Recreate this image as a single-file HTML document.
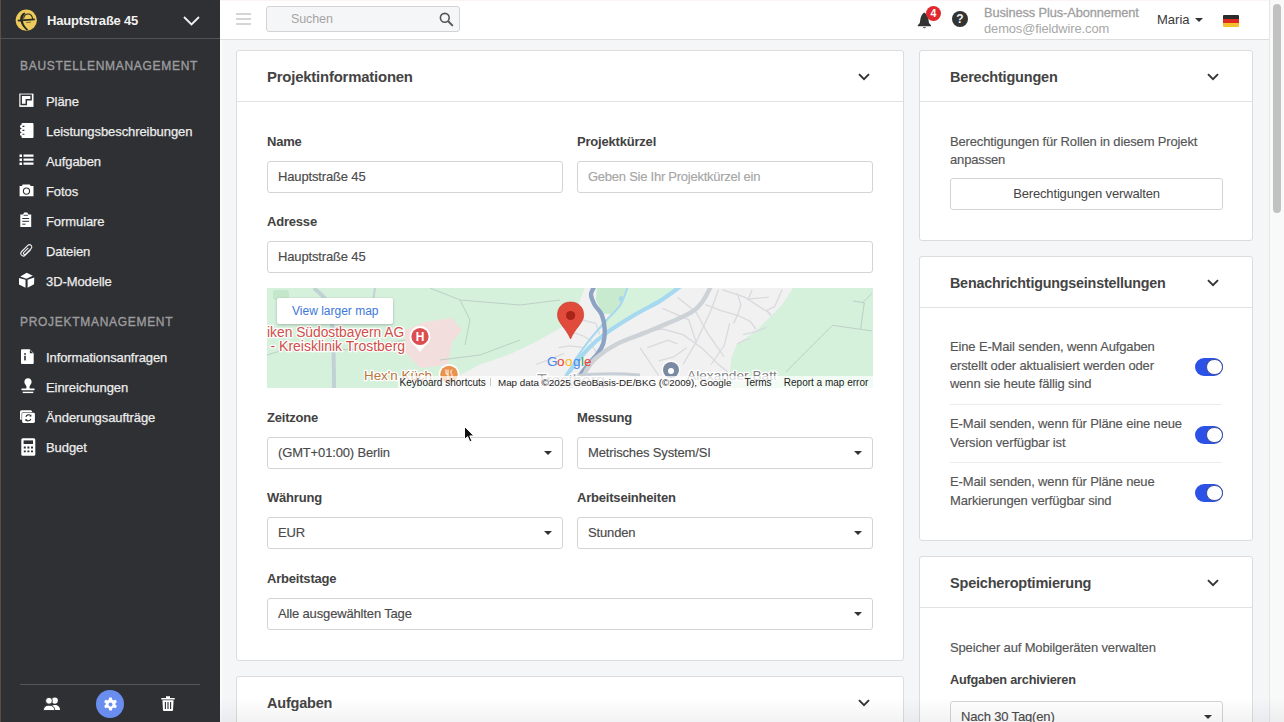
<!DOCTYPE html>
<html><head><meta charset="utf-8">
<style>
*{box-sizing:border-box;margin:0;padding:0}
html,body{width:1284px;height:722px;overflow:hidden;background:#f5f6f8;font-family:"Liberation Sans",sans-serif;}
.abs{position:absolute}
#side{position:absolute;left:0;top:0;width:220px;height:722px;background:#2f3033;}
#side .edge{position:absolute;left:0;top:0;width:1px;height:722px;background:#5a4f3f}
#side .hdr{position:absolute;left:0;top:0;width:220px;height:39px;border-bottom:1px solid #525357}
.proj{position:absolute;left:47px;top:13px;font-size:13px;font-weight:bold;color:#f2f2f2;white-space:nowrap;letter-spacing:-0.2px}
.sec{position:absolute;left:20px;font-size:12px;font-weight:normal;-webkit-text-stroke:0.35px #9c9c9e;color:#9c9c9e;letter-spacing:0.7px;white-space:nowrap}
.item{position:absolute;left:46px;font-size:13px;color:#ececec;-webkit-text-stroke:0.25px #ececec;white-space:nowrap;letter-spacing:-0.08px}
.ico{position:absolute;left:19px;width:15px;height:15px}
#top{position:absolute;left:220px;top:0;width:1049px;height:40px;background:#fff;border-bottom:1px solid #dedede}
#sb{position:absolute;left:1269px;top:0;width:15px;height:722px;background:#f9f9f9;border-left:1px solid #e6e6e6}
#sb .th{position:absolute;left:3px;top:4px;width:8px;height:209px;border-radius:4px;background:#c1c1c1}
.card{position:absolute;background:#fff;border:1px solid #dcdcdc;border-radius:3px}
.card .ch{position:absolute;left:0;top:0;right:0;height:51px;border-bottom:1px solid #e2e2e2}
.ttl{position:absolute;left:30px;top:18px;font-size:15px;font-weight:bold;color:#444;white-space:nowrap;letter-spacing:-0.2px}
.chev{position:absolute;width:12px;height:8px}
.lbl{position:absolute;font-size:13px;font-weight:bold;color:#424242;white-space:nowrap;letter-spacing:-0.2px}
.inp{position:absolute;height:32px;border:1px solid #d4d4d4;border-radius:3px;background:#fff;font-size:13px;color:#4a4a4a;-webkit-text-stroke:0.15px currentColor;padding-left:10px;line-height:30px;white-space:nowrap;letter-spacing:-0.15px}
.inp .car{position:absolute;right:10px;top:13px;width:0;height:0;border-left:4px solid transparent;border-right:4px solid transparent;border-top:4px solid #333}
.txt{position:absolute;font-size:13px;color:#555;-webkit-text-stroke:0.15px #555;line-height:18.7px;letter-spacing:-0.15px}
.tog{position:absolute;left:275px;width:28px;height:17.5px;border-radius:9px;background:#2b51e6}
.tog:after{content:"";position:absolute;right:0.5px;top:0.5px;width:16.5px;height:16.5px;box-sizing:border-box;border-radius:50%;background:#fff;border:1.2px solid #3b4f9a}
.sep{position:absolute;left:30px;width:272px;height:1px;background:#ececec}
</style></head><body>

<div id="side">
  <div class="edge"></div>
  <div class="hdr"></div>
  <svg class="abs" style="left:15px;top:9px" width="23" height="23" viewBox="0 0 23 23">
    <circle cx="11.3" cy="11.2" r="10.6" fill="#eccb5c"/>
    <path d="M9.5 3.4 C6.2 4.6 4.6 8 5.4 12 C6.2 16 8.8 18.8 11.8 21.4 L13.2 20.6 C10.6 18 8.6 15.6 8 12.4 C7.4 9 8.2 6.2 10.4 4.4 Z" fill="#2a2a26"/>
    <path d="M2.8 11.6 L19.8 10.4" stroke="#2a2a26" stroke-width="1.6"/>
    <path d="M8.6 9.6 C9 6.6 10.6 5 13 5 C15.6 5 17.4 7 17.6 10.2" fill="none" stroke="#2a2a26" stroke-width="1.1"/>
    <path d="M11 13.6 L16 13.2" stroke="#2a2a26" stroke-width="0.8" opacity="0.7"/>
  </svg>
  <div class="proj">Hauptstraße 45</div>
  <svg class="abs" style="left:183px;top:16px" width="17" height="10" viewBox="0 0 17 10"><path d="M1 1 L8.5 8.5 L16 1" fill="none" stroke="#f2f2f2" stroke-width="1.8"/></svg>
  <div class="sec" style="top:59px">BAUSTELLENMANAGEMENT</div>
  <div class="sec" style="top:315px">PROJEKTMANAGEMENT</div>

  <svg class="abs" style="left:19px;top:93px" width="15" height="14" viewBox="0 0 15 14"><rect x="0.3" y="0.6" width="14.2" height="13.3" fill="#fff"/><path d="M2.2 11.6 V2.2 H12.1 V6.8 H7.3 V11.6 Z" fill="none" stroke="#2f3033" stroke-width="1.5"/></svg>
  <div class="item" style="top:94px">Pläne</div>

  <svg class="abs" style="left:19px;top:122px" width="15" height="17" viewBox="0 0 15 17"><rect x="2.5" y="0.9" width="12" height="15.1" rx="1" fill="#fff"/><circle cx="2.6" cy="4.4" r="1.6" fill="#fff"/><circle cx="2.6" cy="8.4" r="1.6" fill="#fff"/><circle cx="2.6" cy="12.2" r="1.6" fill="#fff"/><path d="M3.4 4.4h2M3.4 8.4h2M3.4 12.2h2" stroke="#2f3033" stroke-width="1.1"/></svg>
  <div class="item" style="top:124px">Leistungsbeschreibungen</div>

  <svg class="ico" style="top:154px;height:12px" viewBox="0 0 15 12"><path d="M0.5 0.5h2.5v2.5h-2.5zM0.5 4.5h2.5v2.5h-2.5zM0.5 8.5h2.5v2.5h-2.5zM4.5 0.6h10v2.2h-10zM4.5 4.6h10v2.2h-10zM4.5 8.6h10v2.2h-10z" fill="#fff"/></svg>
  <div class="item" style="top:154px">Aufgaben</div>

  <svg class="abs" style="left:19px;top:183px" width="15" height="14" viewBox="0 0 15 14"><path d="M3.6 1.4 H10.9 L11.6 3.1 H14.5 V13.3 H0.6 V3.1 H3.0 Z" fill="#fff"/><circle cx="7.5" cy="8.1" r="3.1" fill="none" stroke="#2f3033" stroke-width="1.1"/></svg>
  <div class="item" style="top:184px">Fotos</div>

  <svg class="abs" style="left:20px;top:212px" width="12" height="16" viewBox="0 0 12 16"><path d="M0.3 2.5 H3 L4.2 0.4 H7.3 L8.4 2.5 H11.2 V15 H0.3 Z" fill="#fff"/><path d="M3.6 3.3h4.3" stroke="#2f3033" stroke-width="0.9"/><path d="M2.3 6.5h6.8M2.3 9.3h6.8M2.3 12.2h3.2" stroke="#2f3033" stroke-width="1"/></svg>
  <div class="item" style="top:214px">Formulare</div>

  <svg class="abs" style="left:19px;top:243px" width="15" height="16" viewBox="0 0 15 16"><path d="M11.6 6.8 L6.3 12.1 C5.2 13.2 3.6 13.2 2.6 12.2 C1.6 11.2 1.6 9.6 2.7 8.5 L8.8 2.4 C9.7 1.5 11.2 1.5 12.1 2.4 C13 3.3 13 4.8 12.1 5.7 L6.6 11.2 C6.1 11.7 5.3 11.7 4.8 11.2 C4.3 10.7 4.3 9.9 4.8 9.4 L9.3 4.9" fill="none" stroke="#f0f0f0" stroke-width="1.1"/></svg>
  <div class="item" style="top:244px">Dateien</div>

  <svg class="abs" style="left:18px;top:272px" width="17" height="17" viewBox="0 0 17 17"><path d="M8.7 0.7 L14.8 3.8 L8.4 6.8 L2.3 4.4 Z" fill="#fff"/><path d="M1 5.9 L7.5 7.8 V15.7 L1 12.6 Z" fill="#fff"/><path d="M9.6 7.8 L16.3 5.6 L16 12.3 L9.6 15.7 Z" fill="#fff"/></svg>
  <div class="item" style="top:274px">3D-Modelle</div>

  <svg class="ico" style="top:349px;left:21px;width:13px" viewBox="0 0 13 15"><path d="M1 0.3h7.8l3.9 3.9v9.8a1 1 0 0 1 -1 1H1a1 1 0 0 1 -1 -1V1.3a1 1 0 0 1 1 -1z" fill="#fff"/><path d="M8.8 0.8 L12.2 4.2 H8.8z" fill="#2f3033"/><circle cx="4" cy="5" r="0.9" fill="#2f3033"/><rect x="3.2" y="6.8" width="1.6" height="4.6" fill="#2f3033"/></svg>
  <div class="item" style="top:350px">Informationsanfragen</div>

  <svg class="ico" style="top:378px;left:20.5px;width:14px;height:16px" viewBox="0 0 14 16"><path d="M7 0.3 C9.3 0.3 10.6 2 10.6 4 C10.6 5.8 9.2 7 8.6 8.2 L8.6 10.4 H13.5 V12.3 H0.5 V10.4 H5.4 L5.4 8.2 C4.8 7 3.4 5.8 3.4 4 C3.4 2 4.7 0.3 7 0.3Z" fill="#fff"/><rect x="1.7" y="13.7" width="10.6" height="1.4" fill="#fff"/></svg>
  <div class="item" style="top:380px">Einreichungen</div>

  <svg class="abs" style="left:19px;top:409px" width="17" height="15" viewBox="0 0 17 15"><rect x="1" y="1.3" width="12.2" height="9.7" rx="1.6" fill="#fff"/><rect x="2.6" y="3.2" width="13.8" height="11.3" rx="1.6" fill="#2f3033"/><rect x="3.1" y="3.7" width="12.8" height="10.3" rx="1.4" fill="#fff"/><path d="M6.9 8 A2.7 2.7 0 0 1 11.8 7 M11.8 9.8 A2.7 2.7 0 0 1 6.9 10.6" fill="none" stroke="#2f3033" stroke-width="1.1"/><path d="M12.4 5.6 L12.3 7.8 L10.2 7.2Z M6.3 12.1 L6.4 9.9 L8.5 10.5Z" fill="#2f3033"/></svg>
  <div class="item" style="top:410px">Änderungsaufträge</div>

  <svg class="ico" style="top:438px;left:20.5px;width:15px;height:18px" viewBox="0 0 15 18"><rect x="0.3" y="0.3" width="14" height="17.4" rx="1.5" fill="#fff"/><rect x="2.6" y="2.4" width="9.4" height="3.6" fill="#2f3033"/><path d="M2.8 8.6h2v1.8h-2zM6.4 8.6h2v1.8h-2zM10 8.6h2v1.8h-2zM2.8 12.4h2v1.8h-2zM6.4 12.4h2v1.8h-2zM10 12.4h2v1.8h-2z" fill="#2f3033"/></svg>
  <div class="item" style="top:440px">Budget</div>

  <div class="abs" style="left:20px;top:684px;width:180px;height:1px;background:#55565a"></div>
  <svg class="abs" style="left:43px;top:697px" width="18" height="14" viewBox="0 0 18 14"><circle cx="11.8" cy="3.6" r="3.1" fill="#fff"/><path d="M7.5 13 C7.5 9.5 9 8 11.8 8 C14.8 8 17 9.8 17 13Z" fill="#fff"/><circle cx="6" cy="3.8" r="3.4" fill="#fff" stroke="#2f3033" stroke-width="0.9"/><path d="M0.4 13.5 C0.4 10 2.5 8.2 6 8.2 C9.5 8.2 11.8 10 11.8 13.5Z" fill="#fff" stroke="#2f3033" stroke-width="0.9"/></svg>
  <div class="abs" style="left:96px;top:690px;width:28px;height:28px;border-radius:50%;background:#6a8ef0"></div>
  <svg class="abs" style="left:102.5px;top:696.5px" width="15" height="15" viewBox="0 0 15 15"><path d="M6.2 0.5h2.6l0.4 2 1.5 0.9 1.9-0.7 1.3 2.2-1.5 1.3v1.6l1.5 1.3-1.3 2.2-1.9-0.7-1.5 0.9-0.4 2H6.2l-0.4-2-1.5-0.9-1.9 0.7-1.3-2.2 1.5-1.3V6.2L1.1 4.9l1.3-2.2 1.9 0.7 1.5-0.9z" fill="#fff"/><circle cx="7.5" cy="7.5" r="2" fill="#6a8ef0"/></svg>
  <svg class="abs" style="left:161px;top:696px" width="14" height="15" viewBox="0 0 14 15"><path d="M0.3 2h13.4v1.6H0.3z M5 0.3h4v1.8H5z" fill="#fff"/><path d="M1.4 4.2h11.2l-0.6 10a0.8 0.8 0 0 1 -0.8 0.7H2.8a0.8 0.8 0 0 1 -0.8 -0.7z" fill="#fff"/><path d="M4.4 6v7M7 6v7M9.6 6v7" stroke="#2f3033" stroke-width="1.1"/></svg>
</div>

<div class="abs" style="left:220px;top:40px;width:2px;height:682px;background:#fbfbfc"></div>
<div id="top">
  <div class="abs" style="left:0;top:0;width:1050px;height:1px;background:#fbf4f2"></div>
  <div class="abs" style="left:16px;top:13px;width:15px;height:2px;background:#d5d5d5"></div>
  <div class="abs" style="left:16px;top:18px;width:15px;height:2px;background:#d5d5d5"></div>
  <div class="abs" style="left:16px;top:23px;width:15px;height:2px;background:#d5d5d5"></div>
  <div class="abs" style="left:46px;top:6px;width:194px;height:26px;border:1px solid #d3d3d3;border-radius:3px;background:#f5f6f7"></div>
  <div class="abs" style="left:71px;top:12px;font-size:12.5px;color:#a5a5a5;letter-spacing:-0.1px">Suchen</div>
  <svg class="abs" style="left:219px;top:12px" width="15" height="15" viewBox="0 0 15 15"><circle cx="5.8" cy="5.8" r="4.4" fill="none" stroke="#555" stroke-width="1.6"/><path d="M9 9 L13.8 13.8" stroke="#555" stroke-width="1.9"/></svg>
  <svg class="abs" style="left:696px;top:11px" width="18" height="18" viewBox="0 0 18 18"><path d="M8.3 1.6 C6.6 2.6 4.6 5.6 4.2 9.2 L3.8 12 L1.8 14.2 V15.2 H15 V14.2 L13 12 L12.6 9.2 C12.2 5.6 10 2.6 8.3 1.6Z" fill="#333"/><path d="M6.8 16.3 A1.8 1.6 0 0 0 10 16.3Z" fill="#333"/></svg>
  <div class="abs" style="left:706px;top:6px;width:15px;height:15px;border-radius:50%;background:#e0282e;color:#fff;font-size:10.5px;font-weight:bold;text-align:center;line-height:15px">4</div>
  <div class="abs" style="left:732px;top:11px;width:16px;height:16px;border-radius:50%;background:#333;color:#f4f4f4;font-size:12px;font-weight:bold;text-align:center;line-height:16px">?</div>
  <div class="abs" style="left:764px;top:5px;font-size:12.8px;-webkit-text-stroke:0.3px #a0a0a0;color:#a0a0a0;white-space:nowrap;letter-spacing:-0.1px">Business Plus-Abonnement</div>
  <div class="abs" style="left:764px;top:20.5px;font-size:12.9px;color:#a8a8a8;white-space:nowrap;letter-spacing:-0.1px">demos@fieldwire.com</div>
  <div class="abs" style="left:937px;top:12px;font-size:13px;color:#3a3a3a;white-space:nowrap">Maria</div>
  <div class="abs" style="left:975px;top:18px;width:0;height:0;border-left:4px solid transparent;border-right:4px solid transparent;border-top:4px solid #333"></div>
  <div class="abs" style="left:1003px;top:15px;width:16px;height:4px;background:#2b2b2b;border-radius:1px 1px 0 0"></div>
  <div class="abs" style="left:1003px;top:19px;width:16px;height:4px;background:#dd2a22"></div>
  <div class="abs" style="left:1003px;top:23px;width:16px;height:4px;background:#f5c02c;border-radius:0 0 1px 1px"></div>
</div>
<div class="card" style="left:236px;top:50px;width:668px;height:611px">
  <div class="ch"></div>
  <div class="ttl" style="left:30px;top:18px;font-size:14.9px">Projektinformationen</div>
  <svg class="abs" style="left:621px;top:22px" width="12" height="8" viewBox="0 0 12 8"><path d="M1 1.2 L6 6.2 L11 1.2" fill="none" stroke="#333" stroke-width="1.9"/></svg>
  <div class="lbl" style="left:30px;top:83px">Name</div>
  <div class="inp" style="left:30px;top:110px;width:296px">Hauptstraße 45</div>
  <div class="lbl" style="left:340px;top:83px">Projektkürzel</div>
  <div class="inp" style="left:340px;top:110px;width:296px;color:#a6a6a6;letter-spacing:-0.25px">Geben Sie Ihr Projektkürzel ein</div>
  <div class="lbl" style="left:30px;top:163px">Adresse</div>
  <div class="inp" style="left:30px;top:190px;width:606px">Hauptstraße 45</div>
  <div id="map" class="abs" style="left:30px;top:237px;width:606px;height:100px;background:#d3f0dc;overflow:hidden"><svg width="606" height="100" viewBox="0 0 606 100" style="position:absolute;left:0;top:0">
<rect width="606" height="100" fill="#d5f1dc"/>
<polygon points="138.0,42.0 158.0,34.0 185.0,30.0 195.0,42.0 185.0,54.0 181.0,77.0 153.0,80.0 138.0,64.0" fill="#f3dede"/>
<path d="M0.0 67.0 L33.0 57.0 L83.0 62.0 L138.0 52.0" fill="none" stroke="#bdcfc6" stroke-width="1"/><path d="M193.0 12.0 L203.0 32.0 L198.0 57.0" fill="none" stroke="#bdcfc6" stroke-width="1"/><path d="M163.0 0.0 L193.0 12.0 L253.0 17.0 L293.0 12.0" fill="none" stroke="#bdcfc6" stroke-width="1"/><path d="M173.0 72.0 L213.0 67.0 L253.0 52.0" fill="none" stroke="#bdcfc6" stroke-width="1"/><path d="M518.8 84.0 L565.5 37.3 L604.8 42.9" fill="none" stroke="#bdcfc6" stroke-width="1"/><path d="M595.4 14.8 L604.8 5.5" fill="none" stroke="#bdcfc6" stroke-width="1"/><path d="M586.1 13.0 L597.3 14.8 L593.6 41.0" fill="none" stroke="#bdcfc6" stroke-width="1"/>
<path d="M47 0 C52 5 58 9 62 16 C66 30 67 60 67 100" fill="none" stroke="#c2d1d6" stroke-width="4"/><path d="M108 0 L106.5 10" fill="none" stroke="#c2d1d6" stroke-width="2"/><rect x="6" y="2" width="16" height="10" rx="3" fill="#c4e6cb"/>

<polygon points="317.7,0.0 526.0,0.0 515.0,16.7 504.0,28.0 489.0,43.0 470.0,56.0 464.6,69.0 462.7,84.0 461.0,100.0 173.0,100.0 188.0,90.0 213.0,76.5 241.0,67.0 269.0,54.0 295.0,39.0 310.0,20.0" fill="#f2f1f1"/>
<polygon points="330.0,0.0 360.0,0.0 353.5,16.7 345.0,26.0 336.0,26.0 329.0,12.0" fill="#c8eacf"/><path d="M354 8 a2 3 0 1 0 0.1 0" fill="#a6d6ee"/>
<polygon points="360.0,0.0 414.0,0.0 393.9,12.4 367.9,26.8 340.6,44.1 337.0,34.0 345.0,26.0 353.5,16.7" fill="#d6f2dd"/>
<path d="M438.4 16.7 L453.4 22.3 L472.1 27.9 L483.3 33.5 L488.9 41.0" fill="none" stroke="#d9dadd" stroke-width="1.3"/><path d="M451.5 1.7 L444.0 22.3 L429.1 54.1 L416.0 76.5" fill="none" stroke="#d9dadd" stroke-width="1.3"/><path d="M470.2 5.5 L473.9 16.7 L470.2 27.9 L466.5 35.4" fill="none" stroke="#d9dadd" stroke-width="1.3"/><path d="M485.1 1.7 L481.4 11.1 L502.0 9.2" fill="none" stroke="#d9dadd" stroke-width="1.3"/><path d="M515.1 1.7 L507.6 18.6 L500.1 22.3 L503.8 27.9" fill="none" stroke="#d9dadd" stroke-width="1.3"/><path d="M373.0 44.7 L395.4 41.0 L416.0 46.6 L434.7 59.7 L451.5 76.5 L460.9 84.0" fill="none" stroke="#d9dadd" stroke-width="1.3"/><path d="M380.5 59.7 L401.0 52.2 L410.4 55.9" fill="none" stroke="#d9dadd" stroke-width="1.3"/><path d="M391.7 72.8 L406.6 69.0 L419.7 59.7" fill="none" stroke="#d9dadd" stroke-width="1.3"/><path d="M410.4 9.2 L429.1 24.2 L440.3 44.7 L457.1 69.0" fill="none" stroke="#d9dadd" stroke-width="1.3"/><path d="M462.7 35.4 L457.1 57.8 L444.0 76.5" fill="none" stroke="#d9dadd" stroke-width="1.3"/><path d="M475.8 46.6 L485.1 44.7 L500.1 39.1" fill="none" stroke="#d9dadd" stroke-width="1.3"/><path d="M470.2 55.9 L477.7 52.2 L483.3 50.3" fill="none" stroke="#d9dadd" stroke-width="1.3"/><path d="M455.2 1.7 L477.7 9.2 L503.8 26.0" fill="none" stroke="#d9dadd" stroke-width="1.3"/><path d="M395.4 20.4 L421.6 31.6 L429.1 54.1" fill="none" stroke="#d9dadd" stroke-width="1.3"/><path d="M373.0 59.7 L384.2 76.5 L391.7 87.7" fill="none" stroke="#d9dadd" stroke-width="1.3"/><path d="M313.9 31.6 L328.9 35.4 L332.6 46.6" fill="none" stroke="#d9dadd" stroke-width="1.3"/><path d="M306.5 44.7 L317.7 48.5 L325.1 54.1" fill="none" stroke="#d9dadd" stroke-width="1.3"/><path d="M291.5 59.7 L302.7 57.8 L317.7 59.7" fill="none" stroke="#d9dadd" stroke-width="1.3"/><path d="M269.1 76.5 L284.0 70.9 L297.1 65.3" fill="none" stroke="#d9dadd" stroke-width="1.3"/><path d="M325.1 57.8 L332.6 69.0" fill="none" stroke="#d9dadd" stroke-width="1.3"/>
<path d="M414.0 -2.0 C410.6 0.4 401.6 7.6 393.9 12.4 C386.2 17.2 376.8 21.5 367.9 26.8 C359.0 32.1 348.3 38.6 340.6 44.1 C332.9 49.6 328.3 53.3 321.8 60.0 C315.3 66.7 306.4 77.5 301.6 84.5 C296.8 91.5 294.4 99.1 293.0 102.0" fill="none" stroke="#a6d9ef" stroke-width="4.2"/><path d="M361.0 -2.0 C359.8 1.1 356.9 11.2 353.5 16.7 C350.1 22.2 345.9 25.0 340.6 31.0 C335.3 37.0 327.2 46.0 321.8 52.8 C316.4 59.6 310.3 68.8 308.0 72.0" fill="none" stroke="#a6d9ef" stroke-width="2"/>
<path d="M327.6 -2.0 C327.0 -0.6 324.0 3.5 324.0 6.6 C324.0 9.7 325.8 13.3 327.6 16.7 C329.4 20.1 333.1 22.7 334.8 26.8 C336.5 30.9 337.5 36.4 337.7 41.2 C337.9 46.0 337.4 51.5 336.2 55.6 C335.0 59.7 332.9 62.3 330.5 65.7 C328.1 69.1 325.0 71.8 321.8 75.8 C318.5 79.9 314.1 85.6 311.0 90.0 C307.9 94.4 304.3 100.0 303.0 102.0" fill="none" stroke="#8ca3c3" stroke-width="4.4"/>
<path d="M444.0 -2.0 C442.4 0.9 438.2 10.5 434.2 15.3 C430.2 20.1 428.9 22.0 419.8 26.8 C410.7 31.6 391.0 39.3 379.5 44.1 C368.0 48.9 359.0 51.3 350.6 55.6 C342.2 59.9 334.3 65.4 329.0 70.0 C323.7 74.6 322.0 77.7 319.0 83.0 C316.0 88.3 312.3 98.8 311.0 102.0" fill="none" stroke="#cdd2d7" stroke-width="4.4"/>
<path d="M273 100 C278 87 333 84 373 87" fill="none" stroke="#c6cfd6" stroke-width="3"/>
<g font-family="Liberation Sans" font-size="13.8" stroke="#fff" stroke-width="2.5" paint-order="stroke" stroke-linejoin="round">
 <text x="0" y="49" fill="#cf4e49">iken Südostbayern AG</text>
 <text x="3.5" y="62.5" fill="#cf4e49" font-size="14">- Kreisklinik Trostberg</text>
 <text x="97" y="92" fill="#b87640" font-size="13.4">Hex'n Küch</text>
 <text x="420" y="92" fill="#7e7e7e" font-size="13.7">Alexander Batt</text>
 <text x="270" y="98" fill="#9a9a9a" font-size="16">Trostberg</text>
</g>
<circle cx="153" cy="48.5" r="10.5" fill="#fff"/>
<path d="M146 55 L153 64 L160 55Z" fill="#fff"/>
<circle cx="153" cy="48.5" r="8.6" fill="#dc4d4f"/>
<text x="153" y="53" font-family="Liberation Sans" font-weight="bold" font-size="12" fill="#fff" text-anchor="middle">H</text>
<circle cx="182" cy="86.5" r="10.5" fill="#fff"/>
<circle cx="182" cy="86.5" r="8.8" fill="#e9924d"/><path d="M179 81.5v4.5M181 81.5v4.5M179 86h2v5M185 81.5c-1.5 1-1.5 4 0 5v5" fill="none" stroke="#fff" stroke-width="1"/>
<circle cx="404" cy="82" r="9.5" fill="#fff"/>
<circle cx="404" cy="82" r="8" fill="#7b8aa3"/>
<circle cx="404" cy="83" r="3" fill="#fff"/>
<g font-family="Liberation Sans" font-size="13.5" font-weight="normal">
 <text x="280" y="78" fill="#4285f4">G</text>
 <text x="290" y="78" fill="#ea4335">o</text>
 <text x="298" y="78" fill="#fbbc05">o</text>
 <text x="306" y="78" fill="#4285f4">g</text>
 <text x="314" y="78" fill="#34a853">l</text>
 <text x="317" y="78" fill="#ea4335">e</text>
</g>
<path d="M303.6 14 C295 14 290.5 20 290.5 27 C290.5 35 299 40 303.6 51 C308 40 316.70000000000005 35 316.70000000000005 27 C316.70000000000005 20 312 14 303.6 14Z" fill="#e04b3c" stroke="#c5392b" stroke-width="0.6"/>
<circle cx="303.6" cy="27.5" r="4.6" fill="#a82418"/>
<rect x="131" y="88" width="475" height="12" fill="#fff" fill-opacity="0.72"/>
<g font-family="Liberation Sans" font-size="10" fill="#222">
 <text x="132.60000000000002" y="97.5">Keyboard shortcuts</text>
 <text x="231" y="97.5" font-size="9.8">Map data ©2025 GeoBasis-DE/BKG (©2009), Google</text>
 <text x="477.4" y="97.5">Terms</text>
 <text x="516.8" y="97.5">Report a map error</text>
</g>
<rect x="223" y="90" width="1" height="8" fill="#c8c8c8"/>
</svg>
<div class="abs" style="left:10px;top:10px;width:116px;height:26px;background:#fff;border-radius:2px;box-shadow:0 1px 3px rgba(0,0,0,0.25);font-size:12px;color:#3d78d8;line-height:26px;padding-left:15px;white-space:nowrap">View larger map</div>
</div>
  <div class="lbl" style="left:30px;top:359px">Zeitzone</div>
  <div class="inp" style="left:30px;top:386px;width:296px">(GMT+01:00) Berlin<div class="car"></div></div>
  <div class="lbl" style="left:340px;top:359px">Messung</div>
  <div class="inp" style="left:340px;top:386px;width:296px">Metrisches System/SI<div class="car"></div></div>
  <div class="lbl" style="left:30px;top:439px">Währung</div>
  <div class="inp" style="left:30px;top:466px;width:296px">EUR<div class="car"></div></div>
  <div class="lbl" style="left:340px;top:439px">Arbeitseinheiten</div>
  <div class="inp" style="left:340px;top:466px;width:296px">Stunden<div class="car"></div></div>
  <div class="lbl" style="left:30px;top:520px">Arbeitstage</div>
  <div class="inp" style="left:30px;top:547px;width:606px">Alle ausgewählten Tage<div class="car"></div></div>
</div>
<div class="card" style="left:236px;top:676px;width:668px;height:80px">
  <div class="ch"></div>
  <div class="ttl" style="left:30px;top:18px;font-size:14.5px">Aufgaben</div>
  <svg class="abs" style="left:621px;top:22px" width="12" height="8" viewBox="0 0 12 8"><path d="M1 1.2 L6 6.2 L11 1.2" fill="none" stroke="#333" stroke-width="1.9"/></svg>
</div>
<div class="card" style="left:919px;top:50px;width:334px;height:191px">
  <div class="ch"></div>
  <div class="ttl" style="left:30px;top:18px;font-size:14.5px">Berechtigungen</div>
  <svg class="abs" style="left:287px;top:22px" width="12" height="8" viewBox="0 0 12 8"><path d="M1 1.2 L6 6.2 L11 1.2" fill="none" stroke="#333" stroke-width="1.9"/></svg>
  <div class="txt" style="left:30px;top:82px;width:280px;line-height:18.4px">Berechtigungen für Rollen in diesem Projekt anpassen</div>
  <div class="abs" style="left:30px;top:127px;width:273px;height:32px;border:1px solid #d4d4d4;border-radius:3px;text-align:center;line-height:30px;font-size:13px;color:#444;letter-spacing:-0.15px">Berechtigungen verwalten</div>
</div>
<div class="card" style="left:919px;top:256px;width:334px;height:285px">
  <div class="ch"></div>
  <div class="ttl" style="left:30px;top:18px;font-size:14.3px">Benachrichtigungseinstellungen</div>
  <svg class="abs" style="left:287px;top:22px" width="12" height="8" viewBox="0 0 12 8"><path d="M1 1.2 L6 6.2 L11 1.2" fill="none" stroke="#333" stroke-width="1.9"/></svg>
  <div class="txt" style="left:30px;top:81px;width:236px">Eine E-Mail senden, wenn Aufgaben erstellt oder aktualisiert werden oder wenn sie heute fällig sind</div>
  <div class="tog" style="top:101px"></div>
  <div class="sep" style="top:147px"></div>
  <div class="txt" style="left:30px;top:158px;width:236px">E-Mail senden, wenn für Pläne eine neue Version verfügbar ist</div>
  <div class="tog" style="top:169px"></div>
  <div class="sep" style="top:205px"></div>
  <div class="txt" style="left:30px;top:216px;width:236px">E-Mail senden, wenn für Pläne neue Markierungen verfügbar sind</div>
  <div class="tog" style="top:227px"></div>
</div>
<div class="card" style="left:919px;top:556px;width:334px;height:200px">
  <div class="ch"></div>
  <div class="ttl" style="left:30px;top:18px;font-size:14.5px">Speicheroptimierung</div>
  <svg class="abs" style="left:287px;top:22px" width="12" height="8" viewBox="0 0 12 8"><path d="M1 1.2 L6 6.2 L11 1.2" fill="none" stroke="#333" stroke-width="1.9"/></svg>
  <div class="txt" style="left:30px;top:82px;width:280px">Speicher auf Mobilgeräten verwalten</div>
  <div class="lbl" style="left:30px;top:116px;font-size:12.7px">Aufgaben archivieren</div>
  <div class="inp" style="left:30px;top:144px;width:273px">Nach 30 Tag(en)<div class="car"></div></div>
</div>
<svg class="abs" style="left:464px;top:426px" width="12" height="17" viewBox="0 0 12 17"><path d="M0.5 0.5 L0.5 13.5 L3.6 10.6 L5.8 15.8 L7.9 14.9 L5.8 9.9 L10 9.9 Z" fill="#111" stroke="#fff" stroke-width="1"/></svg>
<div id="sb"><div class="th"></div></div>

<div class="abs" style="left:220px;top:698px;width:1064px;height:24px;background:linear-gradient(rgba(40,50,70,0),rgba(40,50,70,0.06));pointer-events:none"></div>
</body></html>
